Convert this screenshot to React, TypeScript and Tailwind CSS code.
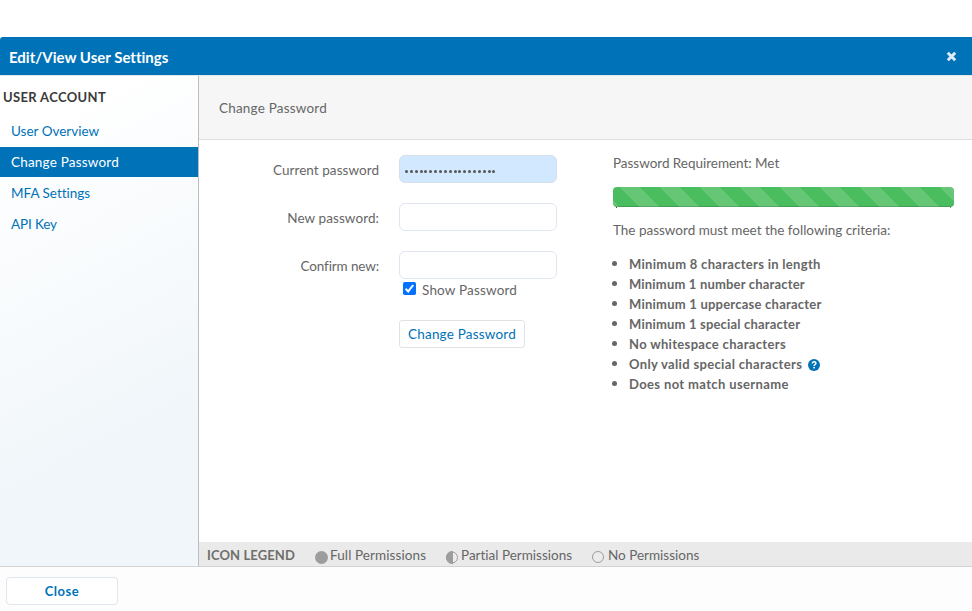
import { ReactNode } from "react";

const navItems = [
  { label: "User Overview", track: "tracking-[0px]" },
  { label: "Change Password", track: "tracking-[0.2px]", active: true },
  { label: "MFA Settings", track: "tracking-[0px]" },
  { label: "API Key", track: "tracking-[-0.15px]" },
];

const criteria = [
  { text: "Minimum 8 characters in length", track: "tracking-[0.3px]" },
  { text: "Minimum 1 number character", track: "tracking-[0.18px]" },
  { text: "Minimum 1 uppercase character", track: "tracking-[0.23px]" },
  { text: "Minimum 1 special character", track: "tracking-[0.19px]" },
  { text: "No whitespace characters", track: "tracking-[0.33px]" },
  { text: "Only valid special characters", track: "tracking-[0.34px]", help: true },
  { text: "Does not match username", track: "tracking-[0.37px]" },
];

function Row({ label, track, children }: { label: string; track: string; children: ReactNode }) {
  return (
    <div className="flex h-12 items-start">
      <label className={`w-[180px] pt-[5px] text-right leading-5 ${track}`}>{label}</label>
      <div className="ml-5">{children}</div>
    </div>
  );
}

function HelpIcon() {
  return (
    <svg className="mb-px ml-[6px] h-3 w-3" viewBox="0 0 12 12">
      <circle cx="6" cy="6" r="6" fill="#0072b8" />
      <path d="M4.2 4.5C4.4 3.2 5.2 2.8 6.1 2.8c1 0 1.8.6 1.8 1.5C7.9 5.5 6.1 5.5 6.1 7" fill="none" stroke="#fff" strokeWidth="1.5" />
      <rect x="5.3" y="7.9" width="1.6" height="1.5" fill="#fff" />
    </svg>
  );
}

export default function App() {
  return (
    <div className="flex h-[611px] w-[972px] flex-col overflow-hidden bg-white pt-[37px] font-['Lato','Open_Sans',sans-serif] text-[13.5px] text-[#666] [font-variant-ligatures:none]">
      <header className="flex h-[38px] shrink-0 items-center justify-between rounded-tl-[3px] bg-[#0072b8] pl-[9px] pr-[15px] text-white">
        <h1 className="pt-px text-[15px] font-bold leading-5 tracking-[0px]">Edit/View User Settings</h1>
        <svg className="h-[11px] w-[11px]" viewBox="0 0 11 11">
          <path d="M1.8 1.8l7.4 7.4M9.2 1.8l-7.4 7.4" stroke="#e0ebf8" strokeWidth="3" />
        </svg>
      </header>

      <div className="flex h-[492px] shrink-0 border-y border-t-[#e6e6e6] border-b-[#d2d2d2]">
        <aside className="w-[199px] shrink-0 border-r border-[#bdbdbd] bg-[linear-gradient(152deg,#ffffff_10%,#f0f6fa_75%)]">
          <h2 className="mt-[11px] pl-[3px] text-[13px] font-bold leading-5 tracking-[0.35px] text-[#3a3a3a]">USER ACCOUNT</h2>
          <nav className="mt-[9px] flex flex-col gap-px">
            {navItems.map((n) => (
              <a
                key={n.label}
                className={`h-[30px] pl-[11px] leading-[30px] ${n.track} ${n.active ? "bg-[#0072b8] text-white" : "text-[#0072b8]"}`}
              >
                {n.label}
              </a>
            ))}
          </nav>
        </aside>

        <main className="flex flex-1 flex-col">
          <div className="flex h-16 items-center border-b border-[#dedede] bg-[#f6f6f6] pl-5 pt-px tracking-[0.2px]">
            Change Password
          </div>

          <div className="flex flex-1">
            <section className="w-[414px] pt-[15px]">
              <Row label="Current password" track="tracking-[0.05px]">
                <div className="flex h-7 w-[158px] items-center gap-[1.87px] rounded-[6px] border border-[#d5e0ea] bg-[#d2e8ff] pl-[5px] pt-1">
                  {Array.from({ length: 19 }, (_, i) => (
                    <span key={i} className="h-[3px] w-[3px] rounded-full bg-[#555]" />
                  ))}
                </div>
              </Row>
              <Row label="New password:" track="tracking-[0.08px]">
                <div className="h-7 w-[158px] rounded-[6px] border border-[#e0e6ed] bg-white" />
              </Row>
              <Row label="Confirm new:" track="tracking-[-0.12px]">
                <div className="h-7 w-[158px] rounded-[6px] border border-[#e0e6ed] bg-white" />
              </Row>
              <div className="-mt-[19px] flex h-5 pl-[204px]">
                <svg className="mt-[2px] h-[13px] w-[13px]" viewBox="0 0 13 13">
                  <rect width="13" height="13" rx="1.8" fill="#0572ff" />
                  <path d="M2.6 6.8L5.2 9.4 10.2 3" fill="none" stroke="#fff" strokeWidth="2" />
                </svg>
                <span className="ml-[6px] leading-5 tracking-[0.18px]">Show Password</span>
              </div>
              <button className="ml-[200px] mt-[20px] h-7 w-[126px] rounded-[3px] border border-[#dfe3e6] bg-white text-[#0072b8] tracking-[0.2px]">
                Change Password
              </button>
            </section>

            <section className="w-[341px] pt-[13px]">
              <p className="leading-5 tracking-[-0.03px]">Password Requirement: Met</p>
              <div className="mt-[14px] h-5 rounded-[4px] bg-[#4abd5e] bg-[linear-gradient(45deg,rgba(255,255,255,.15)_25%,transparent_25%,transparent_50%,rgba(255,255,255,.15)_50%,rgba(255,255,255,.15)_75%,transparent_75%)] bg-size-[40px_40px] bg-position-[7px_0px] shadow-[inset_0_-1px_0_rgba(0,0,0,.15)]" />
              <div className="flex h-px justify-between px-[3px]">
                <span className="w-px bg-[#2d5a36]" />
                <span className="w-px bg-[#7c8f80]" />
              </div>
              <p className="mt-[12px] leading-5 tracking-[-0.01px]">The password must meet the following criteria:</p>
              <ul className="mt-[15px] text-[13px] font-bold">
                {criteria.map((c) => (
                  <li key={c.text} className="flex h-5 items-center">
                    <span className="-mt-[3px] mr-3 -ml-px h-[5px] w-[5px] rounded-full bg-[#666]" />
                    <span className={`pb-[2px] leading-[18px] ${c.track}`}>{c.text}</span>
                    {c.help && <HelpIcon />}
                  </li>
                ))}
              </ul>
            </section>
          </div>

          <div className="flex h-6 items-center bg-[#eaeaea] pl-2 pt-[3px]">
            <span className="w-[108px] text-[13px] font-bold tracking-[0.1px] text-[#6f6f6a]">ICON LEGEND</span>
            <span className="flex w-[131px] items-center">
              <svg className="mr-[2px] mt-[3px] h-[13px] w-[13px]" viewBox="0 0 13 13">
                <circle cx="6.5" cy="6.5" r="6.5" fill="#9d9d9d" />
              </svg>
              <span className="whitespace-nowrap tracking-[0.1px]">Full Permissions</span>
            </span>
            <span className="flex w-[146px] items-center">
              <svg className="mr-[3px] mt-[3px] h-[13px] w-3" viewBox="0 0 12 13">
                <circle cx="6" cy="6.5" r="5.5" fill="#ececec" stroke="#9d9d9d" />
                <path d="M7 0H6a6 6.5 0 0 0 0 13h1z" fill="#9d9d9d" />
              </svg>
              <span className="whitespace-nowrap">Partial Permissions</span>
            </span>
            <span className="flex items-center">
              <svg className="mr-1 mt-[3px] h-3 w-3" viewBox="0 0 12 12">
                <circle cx="6" cy="6" r="5.5" fill="#ececec" stroke="#9d9d9d" />
              </svg>
              <span className="whitespace-nowrap">No Permissions</span>
            </span>
          </div>
        </main>
      </div>

      <footer className="flex-1 bg-[#fdfdfd] pl-[6px] pt-[10px]">
        <button className="h-7 w-28 rounded-[4px] border border-[#e0e6ed] bg-white pt-px text-[13px] font-bold tracking-[0.5px] text-[#0072b8]">Close</button>
      </footer>
    </div>
  );
}
